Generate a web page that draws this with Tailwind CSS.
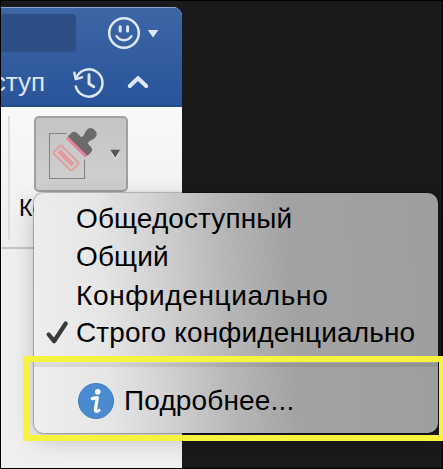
<!DOCTYPE html>
<html lang="ru">
<head>
<meta charset="utf-8">
<title>Меню</title>
<script src="https://cdn.jsdelivr.net/npm/@tailwindcss/browser@4"></script>
</head>
<body class="w-[443px] h-[469px] overflow-hidden bg-[#1a1a1a] font-['Liberation_Sans',Arial,sans-serif]">
<div class="relative w-[443px] h-[469px] overflow-hidden pt-[7px] pl-px">
  <!-- window -->
  <main class="w-[181px] h-[461px] rounded-tr-[9px] overflow-hidden bg-[#efefef] flex flex-col">
    <header class="h-[100px] shrink-0 bg-linear-to-b from-[#3d66a6] to-[#29549a] border-t border-t-[#8ba4cb] border-b-2 border-b-[#244a89]">
      <div class="flex h-[50px] pt-[6px]">
        <div class="w-[75px] h-[38px] rounded-r-[4px] bg-[#2d4f86]"></div>
        <svg class="ml-[31px] mt-[2px] w-[34px] h-[34px]" viewBox="0 0 34 34" fill="none" stroke="#dfe6f3" stroke-linecap="round"><circle cx="17" cy="17" r="14.8" stroke-width="2.5"/><path d="M13.2 10.7v4.3M20.6 10.7v4.3" stroke-width="3"/><path d="M9.5 20.2c3.8 5.4 11.2 5.4 15 0" stroke-width="2.3"/></svg>
        <svg class="ml-[6px] mt-[15px] w-[12px] h-[9px]" viewBox="0 0 12 9"><path d="M.8 1h10.6L6 8.5z" fill="#dfe6f3"/></svg>
      </div>
      <div class="flex h-[47px]">
        <div class="w-[44px] h-[40px] overflow-hidden flex justify-end text-[26px] leading-[28px] pt-[10px] text-[#dce4f2] whitespace-nowrap"><span>ступ</span></div>
        <svg class="ml-[27px] mt-[8px] w-[34px] h-[34px]" viewBox="0 0 34 34" fill="none" stroke="#dfe6f3" stroke-width="2.5" stroke-linecap="round" stroke-linejoin="round"><path d="M4.200 12.200A13.600 13.600 0 1 1 3.800 20.500"/><path d="M2.300 6.700l1.500 6.400 6.200-1.700"/><path d="M17 8.700v9l4.800 3" stroke-width="2.900"/></svg>
        <svg class="ml-[20px] mt-[15px] w-[24px] h-[18px]" viewBox="0 0 24 18" fill="none" stroke="#dfe6f3" stroke-width="4" stroke-linecap="round" stroke-linejoin="round"><path d="M3.800 13L12 5.200 20.200 13"/></svg>
      </div>
    </header>
    <section class="h-[142px] shrink-0 bg-linear-to-b from-[#f8faf9] to-[#eeeeee] border-b-2 border-[#c4c4c4] flex">
      <div class="ml-[7px] mt-[9px] w-[2px] h-[124px] bg-[#dcdddc]"></div>
      <div class="pt-[9px]">
        <div class="ml-[24px] w-[94px] h-[76px] rounded-[5px] border-2 border-[#a0a0a0] bg-linear-to-b from-[#c4c4c4] to-[#d0d0d0] flex">
          <svg class="w-[90px] h-[72px]" viewBox="36 118 90 72"><path d="M66.500 133.500h-17v45h35v-19" fill="none" stroke="#858585" stroke-width="1.100"/><g transform="translate(66 158) rotate(45)"><rect x="-13" y="-5.600" width="26" height="11.200" rx="2" fill="none" stroke="#e39a98" stroke-width="1.800"/><rect x="-9.700" y="-2.300" width="19.400" height="4.600" fill="#e39a98"/></g><g transform="translate(80.500 144) rotate(45)"><path d="M-14 3h27v3.500h-27z" fill="#e98099"/><path d="M-14 3v-3.500q0-4.500 4.500-4.500h5.500c1.500-2.500 0-5-1-8.500-1.500-8 12-8 10.500 0-1 3.500-2.500 6-1 8.500h4q4.500 0 4.500 4.500v3.500z" fill="#6b6b6b" stroke="#555" stroke-width=".7"/></g><path d="M110.200 150.800h10l-5 8.700z" fill="#f0f0f0"/><path d="M110.200 149.800h10l-5 8z" fill="#565656"/></svg>
        </div>
        <div class="ml-[9px] mt-[2px] text-[23px] leading-[28px] text-black">Ко</div>
      </div>
    </section>
  </main>
  <!-- popup menu -->
  <nav class="absolute left-[34px] top-[193px] w-[404px] h-[240px] rounded-[10px] bg-[linear-gradient(86deg,#efefef_0%,#e6e6e6_18%,#d2d2d2_32%,#b7b7b7_48%,#a3a3a3_63%,#9d9e9e_100%)] shadow-[0_6px_22px_rgba(0,0,0,0.22),0_0_1px_1px_rgba(0,0,0,0.25)] overflow-clip text-black text-[28px] leading-[38px] whitespace-nowrap flex flex-col">
    <div class="pt-[7px] h-[170px] flex flex-col">
      <div class="h-[38px] pl-[42px] tracking-[0.1px]">Общедоступный</div>
      <div class="h-[38px] pl-[42px] tracking-[0.1px]">Общий</div>
      <div class="h-[38px] pl-[42px] pt-px tracking-[0.65px]">Конфиденциально</div>
      <div class="h-[38px] flex"><svg class="ml-[11px] mt-[5px] w-[25px] h-[26px]" viewBox="0 0 25 26"><path d="M3.700 15.500l5.400 6.700L20.700 4.500" fill="none" stroke="#3b3b3b" stroke-width="4.300" stroke-linecap="round" stroke-linejoin="round"/></svg><span class="ml-[6px] tracking-[0.15px]">Строго конфиденциально</span></div>
    </div>
    <div class="mt-[-1px] h-[5px] w-full bg-black/8 shrink-0 border-t border-white/20"></div>
    <div class="flex pt-[9px]">
      <svg class="ml-[44px] mt-[7px] w-[36px] h-[36px]" viewBox="0 0 36 36"><circle cx="18" cy="18" r="17.500" fill="#4a8bd0" stroke="#4079b8"/><circle cx="19.800" cy="8.800" r="2.800" fill="#fff"/><path d="M14.300 15.600c2-.6 3.300-.9 5-.9l-1.800 11.500c-.3 2.500 1 2.800 3.500 1.300" fill="none" stroke="#fff" stroke-width="3.200" stroke-linejoin="round" stroke-linecap="round"/></svg>
      <span class="ml-[10px] mt-[6px] tracking-[0.15px]">Подробнее...</span>
    </div>
  </nav>
  <div class="absolute inset-0 border border-black"></div>
  <div class="absolute left-[23px] top-[356px] w-[422px] h-[85px] border-[6px] border-[#f6f23e]"></div>
</div>
</body>
</html>
